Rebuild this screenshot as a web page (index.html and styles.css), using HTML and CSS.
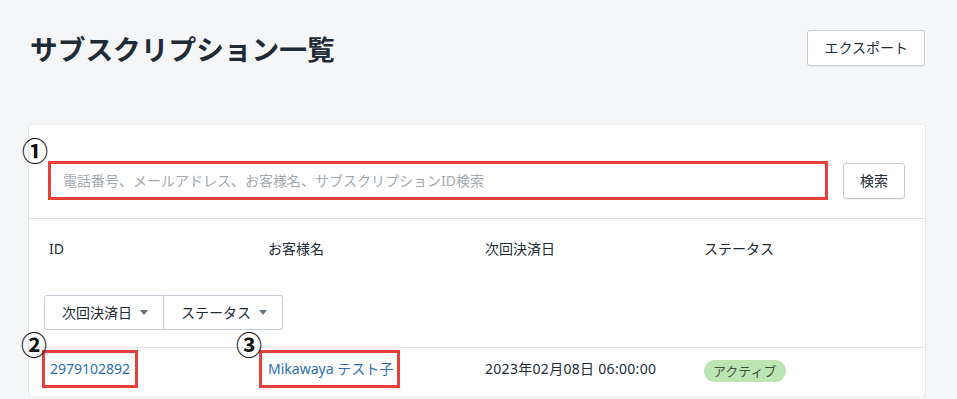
FILE: index.html
```html
<!DOCTYPE html>
<html lang="ja">
<head>
    <meta charset="UTF-8">
    <meta name="viewport" content="width=device-width, initial-scale=1.0">
    <title>サブスクリプション一覧</title>
    <link rel="stylesheet" href="styles.css">
</head>
<body>

<div class="page">
    <header class="page-header">
        <h1>サブスクリプション一覧</h1>
        <button class="btn">エクスポート</button>
    </header>

    <div class="card">
        <div class="search-section">
            <span class="note note-search">①</span>
            <input type="text" class="search-input" placeholder="電話番号、メールアドレス、お客様名、サブスクリプションID検索">
            <button class="btn">検索</button>
        </div>

        <div class="list">
            <div class="list-head">
                <div>ID</div>
                <div>お客様名</div>
                <div>次回決済日</div>
                <div>ステータス</div>
            </div>

            <div class="filters">
                <button class="filter-btn">次回決済日 <span class="caret"></span></button>
                <button class="filter-btn">ステータス <span class="caret"></span></button>
            </div>

            <div class="list-row">
                <div>
                    <span class="marked marked-id">
                        <span class="note note-id">②</span>
                        <a href="#">2979102892</a>
                    </span>
                </div>
                <div>
                    <span class="marked marked-name">
                        <span class="note note-name">③</span>
                        <a href="#">Mikawaya テスト子</a>
                    </span>
                </div>
                <div class="date">2023年02月08日 06:00:00</div>
                <div><span class="badge">アクティブ</span></div>
            </div>
        </div>
    </div>
</div>

</body>
</html>
```

FILE: styles.css
```css
body {
    margin: 0;
    background-color: #f4f6f8;
    color: #212b36;
    font-family: "Noto Sans", "Noto Sans CJK JP", sans-serif;
    font-size: 14px;
    line-height: 20px;
}
.page {
    padding: 30px 32px 0 29px;
}
.page-header {
    display: flex;
    justify-content: space-between;
    align-items: center;
    height: 36px;
    padding-left: 1px;
}
.page-header h1 {
    margin: 0;
    font-family: "Noto Sans CJK JP", sans-serif;
    font-size: 27.7px;
    font-weight: 700;
    line-height: 36px;
    color: #212b36;
}
.btn {
    height: 36px;
    padding: 0 16px;
    background: #fff;
    border: 1px solid #c4cdd5;
    border-radius: 3px;
    box-shadow: 0 1px 0 rgba(22, 29, 37, 0.05);
    font: inherit;
    color: #212b36;
    cursor: pointer;
}
.card {
    margin-top: 59px;
    background: #fff;
    border-radius: 3px;
    box-shadow: 0 0 0 1px rgba(63, 63, 68, 0.06), 0 1px 2px rgba(63, 63, 68, 0.12);
}
.search-section {
    position: relative;
    display: flex;
    align-items: center;
    gap: 15px;
    padding: 36px 20px 18px 19px;
    border-bottom: 1px solid #dfe3e8;
}
.search-input {
    flex: 1;
    height: 39px;
    box-sizing: border-box;
    padding: 0 12px;
    border: 3px solid #e5413b;
    font: inherit;
    color: #212b36;
    outline: none;
}
.search-input::placeholder {
    color: #a3aab1;
}
.search-section .btn {
    width: 62px;
    padding: 0;
}
.note {
    position: absolute;
    font-family: "Noto Sans CJK JP", sans-serif;
    font-size: 26px;
    font-weight: 700;
    line-height: 26px;
    color: #111;
}
.note-search {
    left: -7px;
    top: 12px;
}
.list-head, .list-row {
    display: grid;
    grid-template-columns: 219px 217px 219px 1fr;
    padding: 0 20px;
    align-items: center;
}
.list-head {
    padding-top: 20px;
}
.filters {
    display: flex;
    margin: 36px 0 0 15px;
}
.filter-btn {
    display: flex;
    align-items: center;
    gap: 8px;
    height: 35px;
    padding: 0 15px 0 17px;
    background: #fff;
    border: 1px solid #c4cdd5;
    font: inherit;
    color: #212b36;
}
.filter-btn:first-child {
    border-radius: 3px 0 0 3px;
}
.filter-btn + .filter-btn {
    border-left: none;
    border-radius: 0 3px 3px 0;
}
.caret {
    width: 0;
    height: 0;
    border-left: 4px solid transparent;
    border-right: 4px solid transparent;
    border-top: 5px solid #637381;
}
.list-row {
    margin-top: 17px;
    padding-top: 2px;
    padding-bottom: 8px;
    border-top: 1px solid #dfe3e8;
}
.marked {
    position: relative;
    display: inline-block;
    padding: 6px 5px;
    border: 3px solid #e5413b;
}
.marked-id {
    margin-left: -7px;
}
.marked-name {
    margin-left: -9px;
    padding-left: 6px;
    padding-right: 4px;
}
.note-id {
    left: -24px;
    top: -22px;
}
.note-name {
    left: -26px;
    top: -22px;
}
.marked a {
    color: #2a6db8;
    text-decoration: none;
}
.date {
    letter-spacing: 0.3px;
}
.badge {
    display: inline-block;
    height: 22px;
    line-height: 22px;
    padding: 0 9px;
    margin-top: 3px;
    border-radius: 11px;
    background: #bbe5b3;
    color: #414f3e;
    font-size: 13px;
}
```
